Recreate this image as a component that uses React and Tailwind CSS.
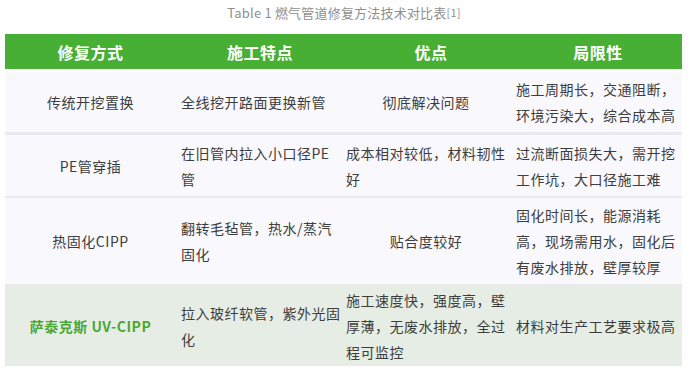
import React from "react";

const cols = "grid grid-cols-[171px_170px_170px_166px] items-center";

function Row({ h, bg, border, cells, green }) {
  return (
    <div className={`${cols} ${h} ${bg} ${border}`}>
      {cells.map((c, i) => {
        let cls = "";
        if (i === 0) cls = "text-center px-[4px]";
        else if (i === 1) cls = "pl-[5px] pr-[5px]";
        else if (i === 2) cls = "pl-0 pr-[10px]";
        else cls = "pl-0 pr-0";
        if (c.center) cls += " text-center";
        const color = i === 0 && green ? "text-[#49a836] font-bold" : "text-[#3d3d3d]";
        return (
          <div key={i} className={`${cls} ${color}`}>
            {c.t}
          </div>
        );
      })}
    </div>
  );
}

export default function App() {
  const rows = [
    {
      h: "h-[60px] mt-[3px]",
      bg: "bg-[#f9f8fc]",
      border: "box-content border-b-[3px] border-[#ebe9f0]",
      cells: [
        { t: "传统开挖置换" },
        { t: "全线挖开路面更换新管" },
        { t: "彻底解决问题", center: true },
        { t: "施工周期长，交通阻断，环境污染大，综合成本高" },
      ],
    },
    {
      h: "h-[61px]",
      bg: "bg-[#f9f8fc]",
      border: "box-content border-b-[2px] border-[#ebe9f0]",
      cells: [
        { t: "PE管穿插" },
        { t: "在旧管内拉入小口径PE管" },
        { t: "成本相对较低，材料韧性好" },
        { t: "过流断面损失大，需开挖工作坑，大口径施工难" },
      ],
    },
    {
      h: "h-[86px]",
      bg: "bg-[#f9f8fc]",
      border: "box-content border-b-[1px] border-[#ebe9f0]",
      cells: [
        { t: "热固化CIPP" },
        { t: "翻转毛毡管，热水/蒸汽固化" },
        { t: "贴合度较好", center: true },
        { t: "固化时间长，能源消耗高，现场需用水，固化后有废水排放，壁厚较厚" },
      ],
    },
    {
      h: "h-[81px]",
      bg: "bg-[#e6ede4]",
      border: "",
      green: true,
      cells: [
        { t: "萨泰克斯 UV-CIPP" },
        { t: "拉入玻纤软管，紫外光固化" },
        { t: "施工速度快，强度高，壁厚薄，无废水排放，全过程可监控" },
        { t: "材料对生产工艺要求极高" },
      ],
    },
  ];

  return (
    <div className="w-[688px] h-[373px] bg-white font-['Noto_Sans_CJK_SC','Noto_Sans',sans-serif] overflow-hidden">
      <div className="h-[34px] flex justify-center pt-[4px]">
        <div className="text-[13px] leading-[18px] text-[#8f8f8f] tracking-[0.2px]">
          Table 1 燃气管道修复方法技术对比表
          <sup className="text-[11px] relative top-[-1px]">[1]</sup>
        </div>
      </div>
      <div className="ml-[5px] w-[677px] text-[14px] leading-[26px] tracking-[0.5px]">
        <div className={`${cols} h-[35px] bg-[#48af35] text-white font-bold text-[16px] tracking-[0.5px]`}>
          <div className="text-center">修复方式</div>
          <div className="text-center pr-[2px]">施工特点</div>
          <div className="text-center">优点</div>
          <div className="text-center pr-[2px]">局限性</div>
        </div>
        {rows.map((r, i) => (
          <Row key={i} {...r} />
        ))}
      </div>
    </div>
  );
}
